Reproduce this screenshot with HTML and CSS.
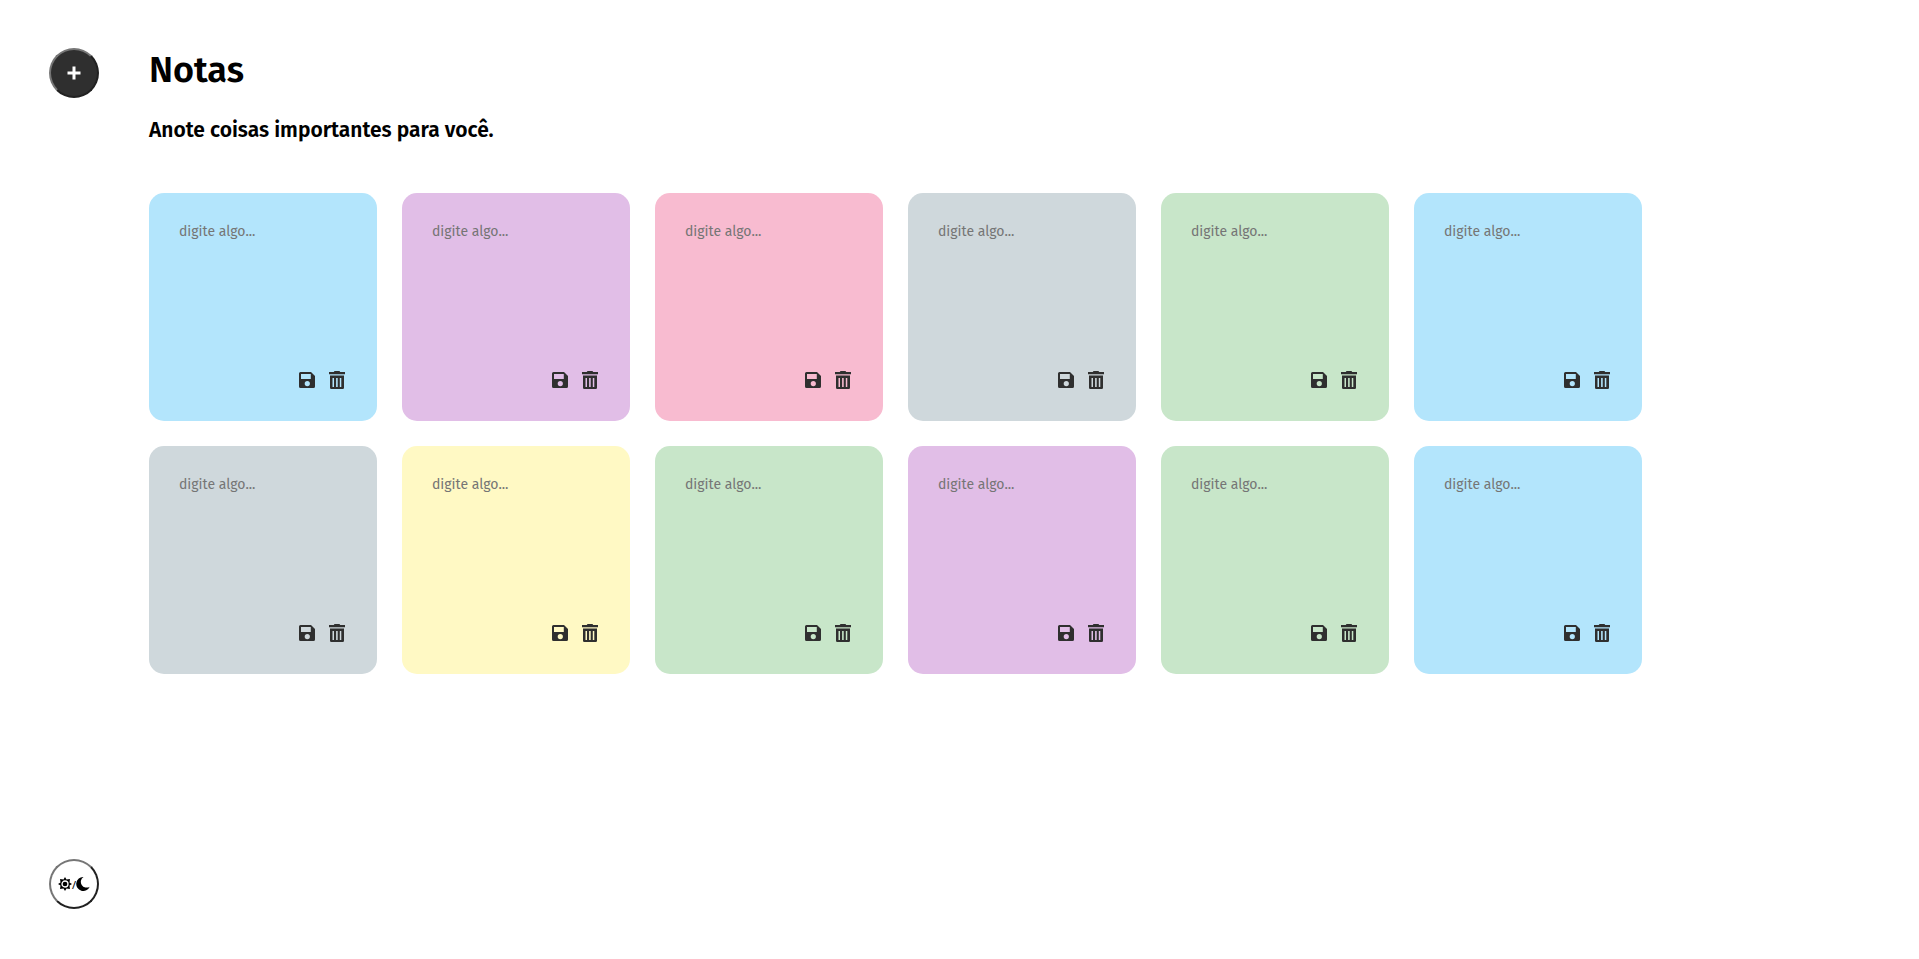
FILE: index.html
```html
<!DOCTYPE html>
<html lang="pt-BR">
<head>
<meta charset="utf-8">
<meta name="viewport" content="width=device-width, initial-scale=1">
<title>Notas</title>
<link rel="stylesheet" href="styles.css">
</head>
<body>
<svg class="sprite" aria-hidden="true">
  <symbol id="save" viewBox="0 0 16 16"><path fill-rule="evenodd" d="M1.500 0H12L16 4V14.500Q16 16 14.500 16H1.500Q0 16 0 14.500V1.500Q0 0 1.500 0ZM2 2V7H11.800V2ZM8.300 9A2.600 2.600 0 1 0 8.300 14.200A2.600 2.600 0 1 0 8.300 9Z"/></symbol>
  <symbol id="trash" viewBox="0 0 16 18"><path fill-rule="evenodd" d="M4.800 1Q5 0 6 0H10Q11 0 11.200 1H16V3.300H0V1ZM1 4.600H15V16.800Q15 18 13.800 18H2.200Q1 18 1 16.800ZM3.500 7V16H5V7ZM7.100 7V16H8.700V7ZM10.800 7V16H12.300V7Z"/></symbol>
</svg>
<div class="app">
  <aside class="sidebar">
    <button class="round add" type="button" aria-label="Adicionar nota"><svg width="14" height="14" viewBox="0 0 14 14" aria-hidden="true"><path d="M7 0.500V13.500M0.500 7H13.500"/></svg></button>
    <button class="round theme" type="button" aria-label="Alternar tema">
      <svg width="14" height="14" viewBox="0 0 14 14" aria-hidden="true"><path d="M7 0L8.500 2.500L11.950 2.050L11.500 5.500L14 7L11.500 8.500L11.950 11.950L8.500 11.500L7 14L5.500 11.500L2.050 11.950L2.500 8.500L0 7L2.500 5.500L2.050 2.050L5.500 2.500Z"/><circle class="ring" cx="7" cy="7" r="3"/></svg><span>/</span><svg width="14" height="14" viewBox="0 0 14 14" aria-hidden="true"><path d="M7.500 0A7 7 0 1 0 13.700 9.700A5.600 5.600 0 0 1 7.500 0Z"/></svg>
    </button>
  </aside>
  <main class="content">
    <h1>Notas</h1>
    <h2>Anote coisas importantes para você.</h2>
    <section class="notes" id="notes"></section>
  </main>
</div>
<script src="app.js"></script>
</body>
</html>
```
FILE: styles.css
```css
* { box-sizing: border-box; }
body {
  margin: 0;
  background: #fff;
  color: #000;
  font-family: "Fira Sans", "Noto Sans", sans-serif;
}
.sprite { display: none; }
.app { display: flex; min-height: 100vh; }
.sidebar {
  display: flex;
  flex-direction: column;
  justify-content: space-between;
  flex: none;
  padding: 48px 50px 50px 49px;
}
.round {
  display: flex;
  align-items: center;
  justify-content: center;
  width: 50px;
  height: 50px;
  padding: 0;
  border: 2px solid;
  border-color: #767676 #212121 #212121 #767676;
  border-radius: 50%;
  cursor: pointer;
}
.add { background: #2f2f2f; }
.add path { stroke: #fff; stroke-width: 3; }
.theme { background: #fff; color: #000; font: 11px "Noto Sans", sans-serif; }
.ring { fill: none; stroke: #fff; stroke-width: 1.3; }
.content { flex: 1; padding: 48px 200px 48px 0; }
h1 { margin: 0; font-size: 36px; font-weight: 600; line-height: 44px; }
h2 { margin: 25px 0 50px; font-size: 21px; font-weight: 600; line-height: 26px; }
.notes { display: grid; grid-template-columns: repeat(auto-fill, 228px); gap: 25px; }
.note {
  display: flex;
  flex-direction: column;
  height: 228px;
  padding: 30px 32px 32px 30px;
  border-radius: 15px;
}
.note textarea {
  flex: 1;
  width: 100%;
  padding: 0;
  border: 0;
  outline: 0;
  resize: none;
  background: transparent;
  font: 14px/17px "Fira Sans", "Noto Sans", sans-serif;
}
.note textarea::placeholder { color: #757575; }
.actions { display: flex; justify-content: flex-end; align-items: center; gap: 14px; }
.actions button { display: flex; padding: 0; border: 0; background: none; cursor: pointer; }
.actions svg { fill: #2f2f2f; }
.blue { background: #b3e5fc; }
.purple { background: #e1bee7; }
.pink { background: #f8bbd0; }
.gray { background: #cfd8dc; }
.green { background: #c8e6c9; }
.yellow { background: #fff9c4; }
```
FILE: app.js
```js
const colors = ["blue", "purple", "pink", "gray", "green", "blue", "gray", "yellow", "green", "purple", "green", "blue"];
document.getElementById("notes").innerHTML = colors.map(color => `
  <article class="note ${color}">
    <textarea placeholder="digite algo..." aria-label="Nota"></textarea>
    <div class="actions">
      <button type="button" aria-label="Salvar"><svg width="16" height="16"><use href="#save"/></svg></button>
      <button type="button" aria-label="Excluir"><svg width="16" height="18"><use href="#trash"/></svg></button>
    </div>
  </article>`).join("");
```
